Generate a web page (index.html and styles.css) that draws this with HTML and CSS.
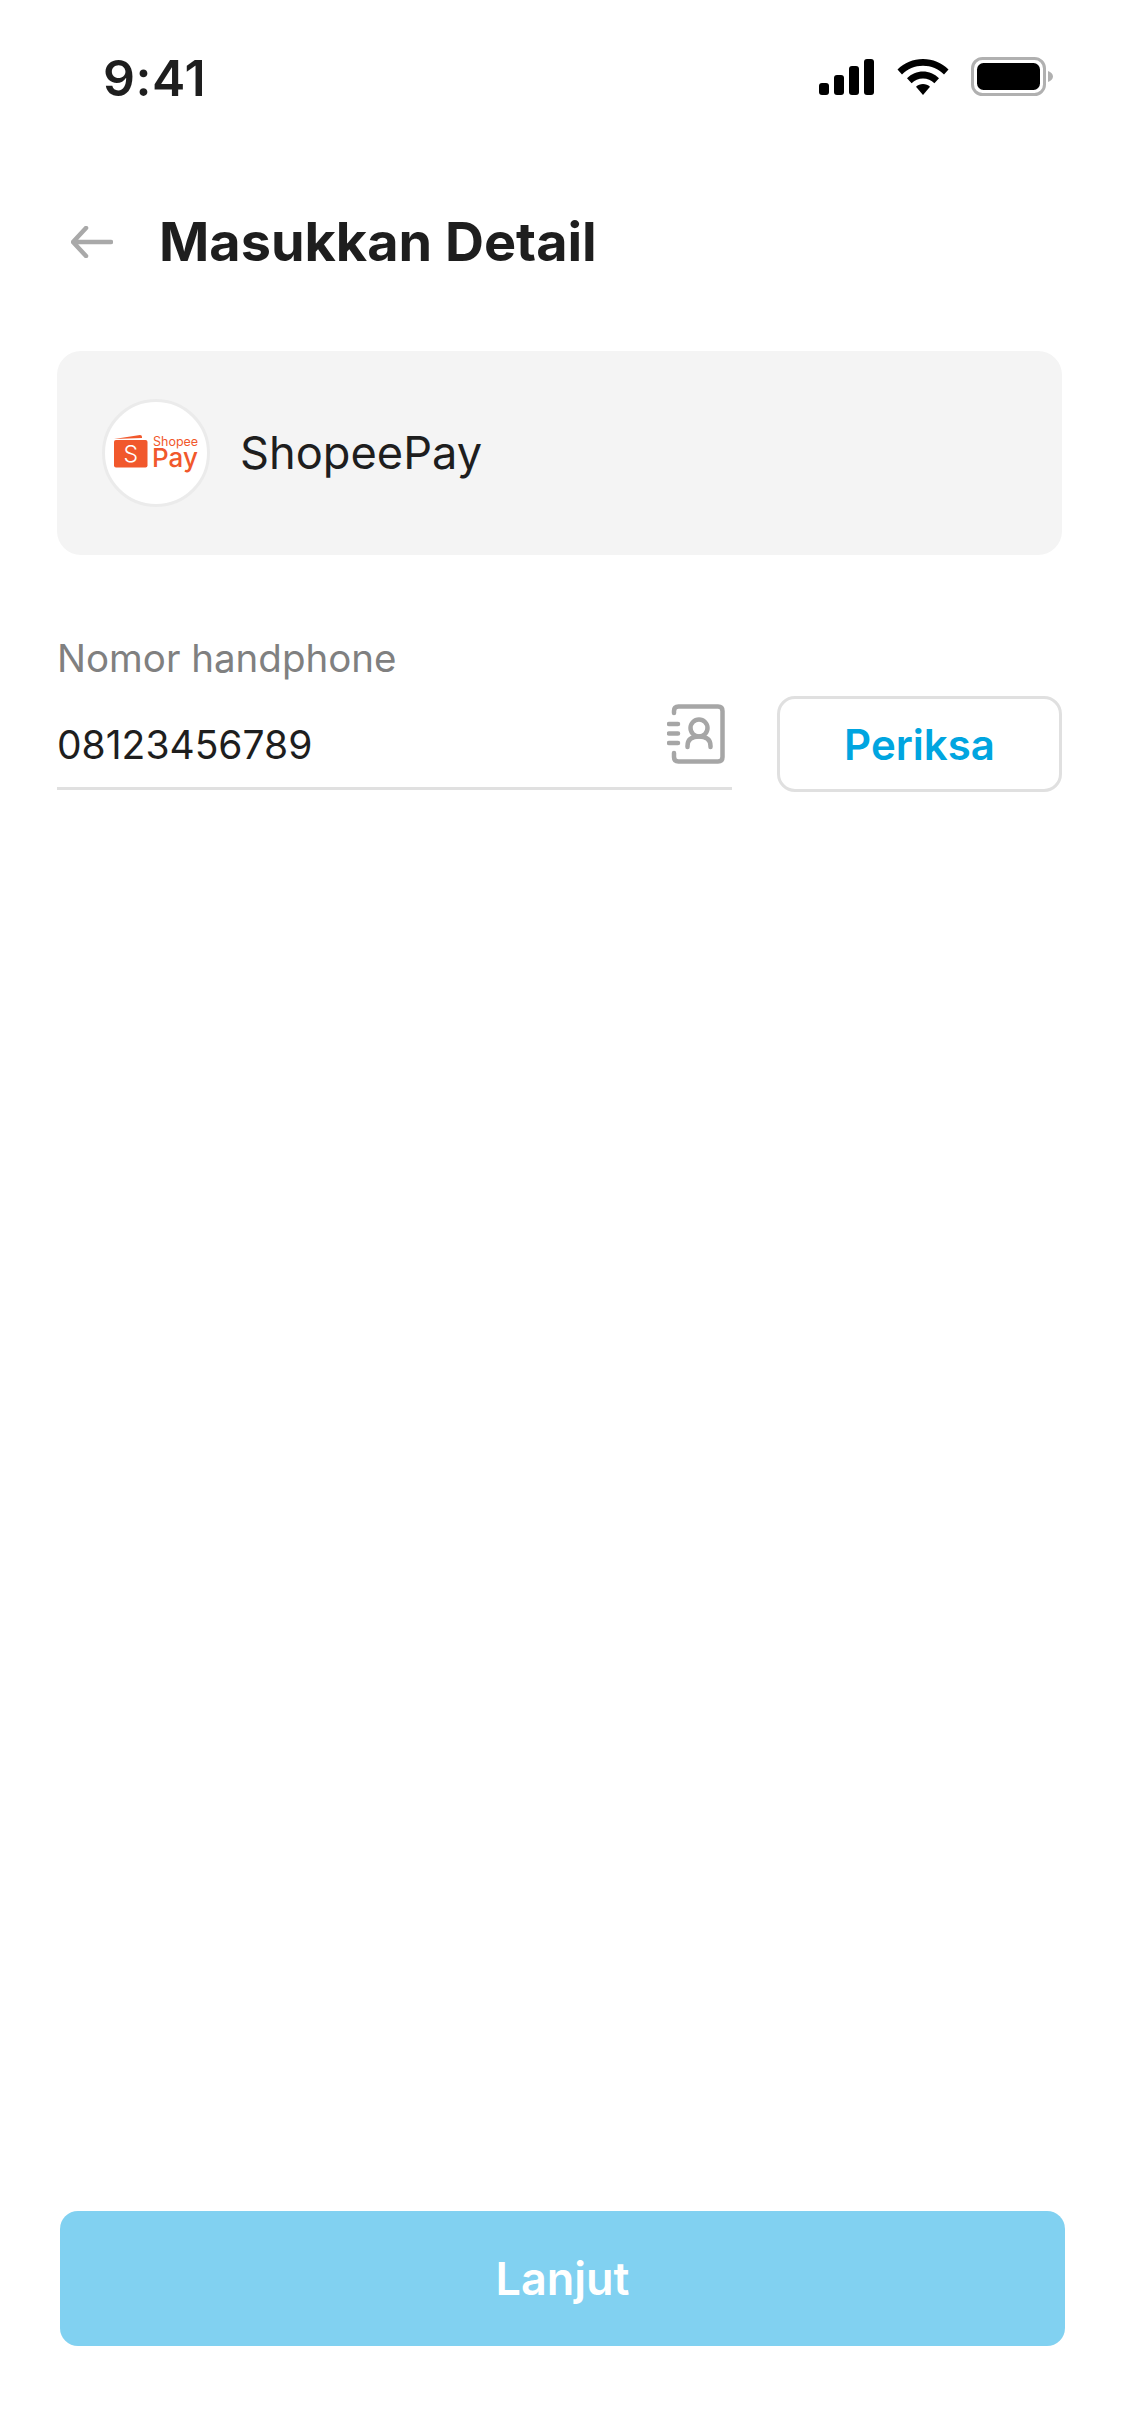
FILE: index.html
```html
<!DOCTYPE html>
<html lang="id">
<head>
    <meta charset="UTF-8">
    <meta name="viewport" content="width=device-width, initial-scale=1.0">
    <title>Masukkan Detail</title>
    <link rel="stylesheet" href="styles.css">
</head>
<body>
    <div class="screen">
        <div class="status-bar">
            <span class="time">9:41</span>
            <div class="status-icons">
                <svg class="signal" width="55" height="36" viewBox="0 0 55 36">
                    <rect x="0" y="24" width="10" height="12" rx="3"/>
                    <rect x="15" y="16" width="10" height="20" rx="3"/>
                    <rect x="30" y="7" width="10" height="29" rx="3"/>
                    <rect x="45" y="0" width="10" height="36" rx="3"/>
                </svg>
                <svg class="wifi" width="52" height="36" viewBox="0 0 52 36">
                    <path d="M26 0C16 0 7.500 3.800 0.500 10.500L5 15.500C10.500 10 17.800 6.800 26 6.800S41.500 10 47 15.500L51.500 10.500C44.500 3.800 36 0 26 0Z"/>
                    <path d="M26 12.500C20 12.500 14.500 14.900 10 19.200L14.600 24.200C17.600 21.200 21.600 19.400 26 19.400S34.400 21.200 37.400 24.200L42 19.200C37.500 14.900 32 12.500 26 12.500Z"/>
                    <path d="M26 25C23.300 25 20.900 26 19 27.800L26 36L33 27.800C31.100 26 28.700 25 26 25Z"/>
                </svg>
                <svg class="battery" width="82" height="39" viewBox="0 0 82 39">
                    <rect x="1.500" y="1.500" width="72" height="36" rx="10" fill="none" stroke="#b0b0b0" stroke-width="3"/>
                    <rect x="6" y="6" width="63" height="27" rx="6.500" fill="#000"/>
                    <path d="M77 14C80 15 82 17 82 19.500S80 24 77 25Z" fill="#b0b0b0"/>
                </svg>
            </div>
        </div>

        <header class="page-header">
            <svg class="back-icon" width="42" height="32" viewBox="0 0 42 32" fill="none">
                <path d="M40 16H3M15 2L2 16L15 30" stroke="#a9a9a9" stroke-width="4.500" stroke-linecap="round" stroke-linejoin="round"/>
            </svg>
            <h1>Masukkan Detail</h1>
        </header>

        <div class="provider-card">
            <div class="provider-logo">
                <svg width="86" height="40" viewBox="0 0 86 40">
                    <path d="M1 6L27 2Q29 2 29 4V5Z" fill="#f1582c"/>
                    <rect x="1" y="7" width="33.500" height="27.500" rx="2" fill="#f1582c"/>
                    <text class="logo-s" x="17.700" y="29" text-anchor="middle">S</text>
                    <text class="logo-shopee" x="40" y="13">Shopee</text>
                    <text class="logo-pay" x="39" y="33.500">Pay</text>
                </svg>
            </div>
            <span class="provider-name">ShopeePay</span>
        </div>

        <div class="phone-row">
            <div class="phone-field">
                <label class="phone-label">Nomor handphone</label>
                <div class="phone-input">
                    <span class="phone-value">08123456789</span>
                    <svg class="contact-icon" width="58" height="60" viewBox="0 0 58 60" fill="none" stroke="#a6a6a6" stroke-width="4.500" stroke-linecap="round" stroke-linejoin="round">
                        <path d="M7 9V7Q7 2.500 11.500 2.500H51Q55.500 2.500 55.500 7V53Q55.500 57.500 51 57.500H11.500Q7 57.500 7 53V49"/>
                        <path d="M2 20H11M2 29.500H11M2 39H11"/>
                        <circle cx="32" cy="24" r="8.500"/>
                        <path d="M20.500 43V42Q20.500 32.500 32 32.500T43.500 42V43"/>
                    </svg>
                </div>
            </div>
            <button class="check-btn">Periksa</button>
        </div>

        <button class="next-btn">Lanjut</button>
    </div>
</body>
</html>
```

FILE: styles.css
```css
* {
    margin: 0;
    padding: 0;
    box-sizing: border-box;
}

body {
    background: #fff;
    font-family: 'Inter', sans-serif;
    color: #1e1e1e;
}

.screen {
    width: 1125px;
    height: 2436px;
    display: flex;
    flex-direction: column;
    padding: 0 63px 90px 57px;
}

/* Status bar */
.status-bar {
    display: flex;
    justify-content: space-between;
    align-items: flex-start;
    padding: 49px 9px 0 46px;
    height: 209px;
}

.time {
    font-size: 50px;
    font-weight: 600;
    line-height: 59px;
    letter-spacing: 0.6px;
}

.status-icons {
    display: flex;
    align-items: flex-end;
    padding-top: 8px;
}

.signal {
    margin-right: 23px;
    margin-left: 1px;
}

.wifi {
    margin-right: 22px;
}

.battery {
    margin-bottom: -1px;
}

/* Header */
.page-header {
    display: flex;
    align-items: center;
    height: 66px;
    padding-left: 14px;
}

.back-icon {
    margin-right: 46px;
    flex-shrink: 0;
}

h1 {
    font-size: 54px;
    font-weight: 700;
    line-height: 66px;
}

/* Provider card */
.provider-card {
    display: flex;
    align-items: center;
    height: 204px;
    margin-top: 76px;
    background: #f4f4f4;
    border-radius: 24px;
    padding-left: 45px;
}

.provider-logo {
    width: 108px;
    height: 108px;
    border-radius: 50%;
    background: #fff;
    border: 3px solid #ebebeb;
    display: flex;
    align-items: center;
    justify-content: center;
    margin-right: 30px;
    flex-shrink: 0;
}

.logo-s {
    font-size: 23px;
    font-weight: 300;
    fill: #fff;
}

.logo-shopee {
    font-size: 12.500px;
    fill: #f1582c;
}

.logo-pay {
    font-size: 26px;
    font-weight: 500;
    fill: #f1582c;
}

.provider-name {
    font-size: 45.200px;
    line-height: 54px;
}

/* Phone number */
.phone-row {
    display: flex;
    align-items: flex-end;
    gap: 45px;
    margin-top: 79px;
}

.phone-field {
    flex: 1;
}

.phone-label {
    display: block;
    font-size: 38.500px;
    line-height: 48px;
    color: #808080;
}

.phone-input {
    display: flex;
    justify-content: space-between;
    align-items: flex-start;
    border-bottom: 3px solid #e0e0e0;
    height: 109px;
    margin-top: -1px;
    padding-right: 7px;
    padding-top: 23px;
}

.phone-value {
    font-size: 39px;
    line-height: 47px;
    padding-top: 17px;
}

.check-btn {
    width: 285px;
    height: 96px;
    margin-bottom: -2px;
    background: #fff;
    border: 3px solid #e0e0e0;
    border-radius: 18px;
    color: #00a5e0;
    font-family: 'Inter', sans-serif;
    font-size: 42px;
    font-weight: 600;
}

/* Bottom button */
.next-btn {
    margin-top: auto;
    margin-left: 3px;
    margin-right: -3px;
    height: 135px;
    background: #81d1f1;
    border: none;
    border-radius: 18px;
    color: #fff;
    font-family: 'Inter', sans-serif;
    font-size: 45px;
    font-weight: 600;
}
```
